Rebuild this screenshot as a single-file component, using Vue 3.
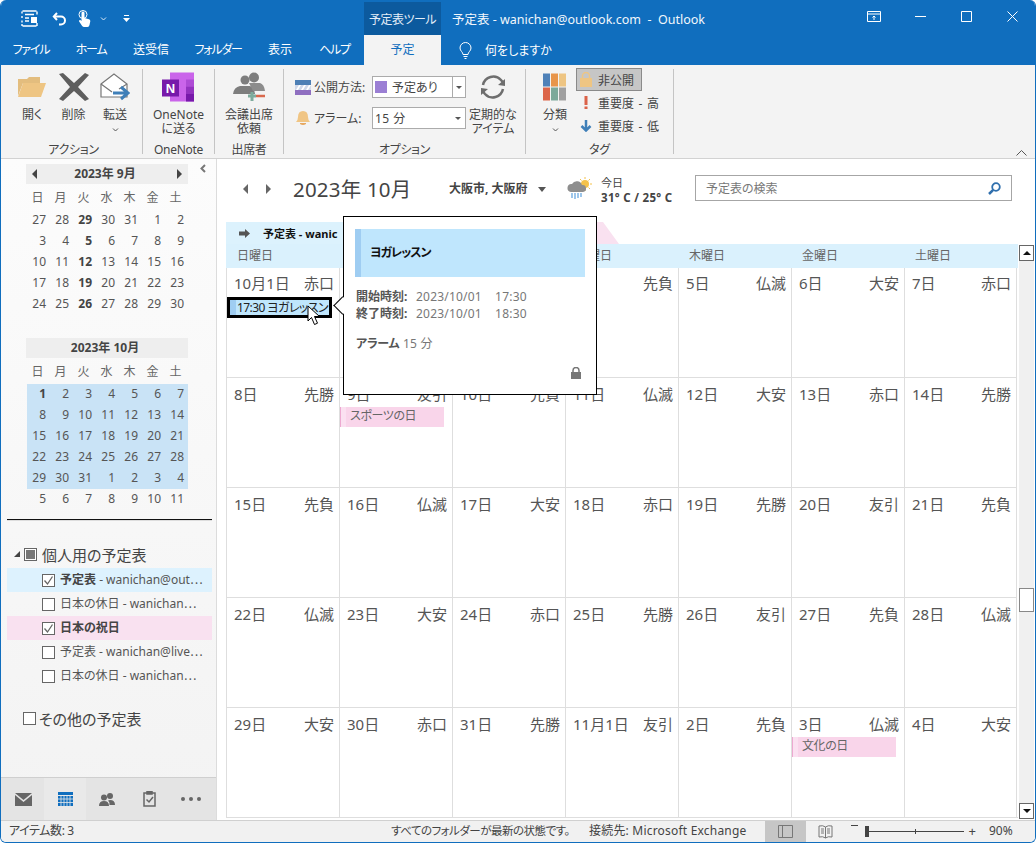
<template>
  <div class="window">
    <header class="titlebar">
      <div class="qat">
        <svg class="q-doc" width="17" height="17" viewBox="0 0 17 17" fill="none" stroke="#fff"><path d="M1.500 1h14M1.500 16h14M1 1.500v2M1 6v2M1 10.500v2M16 1.500v3M16 13v3M1 14v2" stroke-width="1.400"/><path d="M4 4.500h9M4 8h4M4 11h4" stroke-width="1.500"/><path d="M10 7h6v6h-6z" fill="#fff" stroke="none"/></svg>
        <svg class="q-undo" width="15" height="14" viewBox="0 0 15 14" fill="none" stroke="#fff" stroke-width="2"><path d="M5 1 1.800 4.500 5 8"/><path d="M2 4.500h7a4 4 0 0 1 0 8H7"/></svg>
        <svg class="q-touch" width="13" height="17" viewBox="0 0 13 17" fill="#fff"><circle cx="5" cy="4.500" r="4" fill="none" stroke="#fff"/><path d="M3.500 3a1.500 1.500 0 0 1 3 0v5l4.500 1.300q1.500.5 1.300 2l-.8 3.700q-.4 2-2 2H6q-1 0-2-1.300L.8 11 2 9.800l1.500 1.200z"/></svg>
        <svg class="q-chev" width="7" height="4" viewBox="0 0 7 4" fill="none" stroke="#dbe9f6"><path d="m1 .5 2.500 2.500L6 .5"/></svg>
        <svg class="q-more" width="7" height="7" viewBox="0 0 7 7" fill="#fff"><path d="M1 0h5v1H1zM0 3h7L3.500 7z"/></svg>
      </div>
      <div class="tool-tab">予定表ツール</div>
      <div class="title">予定表 - wanichan@outlook.com&nbsp; -&nbsp; Outlook</div>
      <div class="win-btns">
        <svg class="w-opt" width="14" height="11" viewBox="0 0 14 11" fill="none" stroke="#fff"><path d="M.5.500h13v10H.5zM.5 3h13"/><path d="M7 9V5M5.500 6.500 7 5l1.500 1.500"/></svg>
        <svg class="w-min" width="11" height="11" viewBox="0 0 11 11" stroke="#fff"><path d="M0 5.500h11"/></svg>
        <svg class="w-max" width="11" height="11" viewBox="0 0 11 11" fill="none" stroke="#fff"><path d="M.5.500h10v10H.5z"/></svg>
        <svg class="w-close" width="11" height="11" viewBox="0 0 11 11" stroke="#fff"><path d="m.5.500 10 10M10.500.500l-10 10"/></svg>
      </div>
    </header>

    <nav class="tabs">
      <div v-for="t in tabs" :key="t.label" class="tab" :class="{ kana: t.kana }" :style="{ width: t.w + 'px' }">{{ t.label }}</div>
      <div class="tab tab-active">予定</div>
      <svg class="bulb" width="13" height="17" viewBox="0 0 13 17" fill="none" stroke="#fff"><path d="M4 12.500C4 10 1 9 1 6a5.500 5.500 0 0 1 11 0c0 3-3 4-3 6.500zM4.500 14.500h4M5.500 16.500h2"/></svg>
      <div class="tell">何をしますか</div>
    </nav>

    <section class="ribbon">
      <div class="group" style="width: 138px">
        <div class="group-body actions">
          <div class="big-btn">
            <svg width="30" height="26" viewBox="0 0 30 26"><path d="M1 5h9l2-2h11v6H6L1 22z" fill="#e3bd7e"/><path d="M6 9h23l-5 14H1z" fill="#eec583"/></svg>
            <span>開く</span>
          </div>
          <div class="big-btn">
            <svg width="30" height="28" viewBox="0 0 30 28" fill="#5e5e5e"><path d="M0 1 4 0l11 10L26 0l4 2-11 12 11 12-4 2-11-10L4 28l-4-2 11-12z"/></svg>
            <span>削除</span>
          </div>
          <div class="big-btn">
            <svg width="30" height="28" viewBox="0 0 30 28" fill="none"><path d="M1 11 14 1l13 10v13H1z" fill="#fff" stroke="#777" stroke-width="1.200"/><path d="m1 11 11 8M27 11l-8 5" stroke="#777" stroke-width="1.200"/><path d="M13 20h13M21 14l7 6-7 6" stroke="#3f7fb8" stroke-width="3"/></svg>
            <span>転送</span>
            <svg class="chev" width="7" height="4" viewBox="0 0 7 4" fill="none" stroke="#555"><path d="m1 .5 2.500 2.500L6 .5"/></svg>
          </div>
        </div>
        <div class="group-label">アクション</div>
      </div>

      <div class="group" style="width: 72px">
        <div class="group-body center">
          <div class="big-btn">
            <svg width="32" height="29" viewBox="0 0 32 29"><path d="M8 0h24v29H8z" fill="#ca64ea"/><path d="M24 7h8v7h-8z" fill="#ae4bd5"/><path d="M24 14h8v7h-8z" fill="#9332bf"/><path d="M24 21h8v8h-8z" fill="#7719aa"/><path d="M0 7h17v17H0z" fill="#7719aa"/><text x="8.500" y="20" class="on-n">N</text></svg>
            <span>OneNote<br />に送る</span>
          </div>
        </div>
        <div class="group-label">OneNote</div>
      </div>

      <div class="group" style="width: 69px">
        <div class="group-body center">
          <div class="big-btn">
            <svg width="32" height="30" viewBox="0 0 32 30"><circle cx="12" cy="8" r="4.500" fill="#7d7d7d"/><circle cx="21" cy="5.500" r="5" fill="#7d7d7d"/><path d="M0 22q1-7 7-8h10q4 1 5 8z" fill="#7d7d7d"/><path d="M16 11h11q4 1 5 8H20z" fill="#8c8c8c"/><path d="M15 24h8M19 20v9" stroke="#7dab9c" stroke-width="3"/><path d="M23 24h9" stroke="#d9694d" stroke-width="2.500"/></svg>
            <span>会議出席<br />依頼</span>
          </div>
        </div>
        <div class="group-label">出席者</div>
      </div>

      <div class="group" style="width: 242px">
        <div class="group-body options">
          <div class="opt-rows">
            <div class="opt-row">
              <svg width="16" height="15" viewBox="0 0 16 15"><path d="M0 0h16v15H0z" fill="#8f6fc0"/><path d="M0 0h16v5H0z" fill="#4d7fb5"/><path d="M0 5h16v5H0z" fill="#cfd8ea"/><path d="M1 10l3-5h2l-3 5zM6 10l3-5h2l-3 5zM11 10l3-5h2l-3 5z" fill="#fff"/></svg>
              <span class="opt-label">公開方法:</span>
              <div class="select">
                <i class="swatch"></i><span class="sel-text">予定あり</span>
                <b class="sel-drop"></b>
              </div>
            </div>
            <div class="opt-row">
              <svg width="16" height="15" viewBox="0 0 16 15"><path d="M8 0q5 0 5 6 0 3 2 5H1q2-2 2-5 0-6 5-6z" fill="#f0c584"/><path d="M5 12h6v1q-3 2-6 0z" fill="#e6a85f"/></svg>
              <span class="opt-label">アラーム:</span>
              <div class="select plain">
                <span class="sel-text">15 分</span>
                <b class="sel-arrow"></b>
              </div>
            </div>
          </div>
          <div class="big-btn recur">
            <svg width="28" height="26" viewBox="0 0 28 26" fill="none" stroke="#6e6e6e" stroke-width="2.500"><path d="M4 11a10.500 10.500 0 0 1 18-5l2.500 3"/><path d="M24 15a10.500 10.500 0 0 1-18 5l-2.500-3"/><path d="m19 11 7 1V5zM9 15l-7-1v7z" fill="#6e6e6e" stroke="none"/></svg>
            <span>定期的な<br />アイテム</span>
          </div>
        </div>
        <div class="group-label">オプション</div>
      </div>

      <div class="group group-last" style="width: 148px">
        <div class="group-body tags">
          <div class="big-btn classify">
            <svg width="24" height="27" viewBox="0 0 24 27"><path d="M0 0h7v13H0z" fill="#4f81b8"/><path d="M8 0h7v13H8z" fill="#e8954a"/><path d="M16 0h7v13h-7z" fill="#eec583"/><path d="M0 14h7v13H0z" fill="#dc6549"/><path d="M8 14h7v13H8z" fill="#7ca99a"/><path d="M16 14h7v13h-7z" fill="#a0a0a0"/></svg>
            <span>分類</span>
            <svg class="chev" width="7" height="4" viewBox="0 0 7 4" fill="none" stroke="#555"><path d="m1 .5 2.500 2.500L6 .5"/></svg>
          </div>
          <div class="tag-col">
            <div class="tag tag-on">
              <svg width="12" height="15" viewBox="0 0 12 15" fill="#eec583"><path d="M0 6h12v9H0z"/><path d="M2.500 6V4a3.500 3.500 0 0 1 7 0v2" fill="none" stroke="#eec583" stroke-width="1.500"/></svg>
              <span>非公開</span>
            </div>
            <div class="tag">
              <svg width="12" height="13" viewBox="0 0 12 13" fill="#db6249"><path d="M4.500 0h3v9h-3zM4.500 10.500h3V13h-3z"/></svg>
              <span>重要度 - 高</span>
            </div>
            <div class="tag">
              <svg width="12" height="12" viewBox="0 0 12 12" fill="none" stroke="#3f7fb8" stroke-width="2.500"><path d="M6 0v10M1.500 6 6 10.500 10.500 6"/></svg>
              <span>重要度 - 低</span>
            </div>
          </div>
        </div>
        <div class="group-label">タグ</div>
      </div>
      <svg class="collapse" width="11" height="6" viewBox="0 0 11 6" fill="none" stroke="#555"><path d="m.5 5.500 5-5 5 5"/></svg>
    </section>

    <div class="body">
      <aside class="sidebar">
        <svg class="side-toggle" width="6" height="9" viewBox="0 0 6 9" fill="none" stroke="#777" stroke-width="2"><path d="M5 1 1.500 4.500 5 8"/></svg>
        <div v-for="(m, mi) in months" :key="m.title" class="mini" :class="{ 'mini-second': mi === 1 }">
          <div class="mini-head">
            <i v-if="mi === 0" class="mini-prev"></i>
            <span>{{ m.title }}</span>
            <i v-if="mi === 0" class="mini-next"></i>
          </div>
          <div class="mini-week">
            <span v-for="d in weekdays" :key="d">{{ d }}</span>
          </div>
          <div class="mini-days">
            <span
              v-for="(d, i) in m.days"
              :key="i"
              :class="{ bold: m.bold.includes(i), sel: m.selected && i < 35 }"
            >{{ d }}</span>
          </div>
        </div>
        <div class="side-rule"></div>
        <div class="cal-group first">
          <i class="tree-arrow"></i>
          <i class="check mixed"></i>
          <span>個人用の予定表</span>
        </div>
        <div
          v-for="c in calendars"
          :key="c.id"
          class="cal-row"
          :class="c.tone"
        >
          <i class="check" :class="{ checked: c.checked }">
            <svg v-if="c.checked" width="11" height="11" viewBox="0 0 11 11" fill="none" stroke="#666" stroke-width="1.300"><path d="m1.500 5.500 3 3.500 5-7.500"/></svg>
          </i>
          <span class="cal-name"><b v-if="c.bold">{{ c.bold }}</b>{{ c.rest }}</span>
        </div>
        <div class="cal-group other">
          <i class="check"></i>
          <span>その他の予定表</span>
        </div>
        <div class="side-fill"></div>
        <div class="side-nav">
          <div class="nav-item">
            <svg width="17" height="13" viewBox="0 0 17 13"><path d="M0 0h17L8.500 7z" fill="#666"/><path d="M0 2v11h17V2L8.500 9z" fill="#666"/></svg>
          </div>
          <div class="nav-item nav-on">
            <svg width="15" height="14" viewBox="0 0 15 14"><path d="M0 0h15v3H0z" fill="#106ebe"/><path d="M0 4h15v10H0z" fill="#106ebe"/><path d="M3 4v10M6 4v10M9 4v10M12 4v10M0 7h15M0 10.500h15" stroke="#e9e9e9" stroke-width=".8"/></svg>
          </div>
          <div class="nav-item">
            <svg width="16" height="13" viewBox="0 0 16 13" fill="#666"><circle cx="5" cy="4.500" r="3"/><circle cx="11" cy="3" r="3"/><path d="M0 13q0-5 5-5t5 5z"/><path d="M10.500 12H16q0-5-5-5-1 0-2 .5 2 1.500 1.500 4.500z"/></svg>
          </div>
          <div class="nav-item">
            <svg width="13" height="16" viewBox="0 0 13 16" fill="none" stroke="#666" stroke-width="1.500"><path d="M1 2h11v13H1z"/><path d="M4 0h5v3H4z" fill="#666"/><path d="m3.500 8.500 2.500 2.500 4-5" /></svg>
          </div>
          <div class="nav-item">
            <svg width="20" height="4" viewBox="0 0 20 4" fill="#666"><circle cx="2" cy="2" r="2"/><circle cx="10" cy="2" r="2"/><circle cx="18" cy="2" r="2"/></svg>
          </div>
        </div>
      </aside>

      <main class="main">
        <div class="toolbar">
          <i class="nav-prev"></i>
          <i class="nav-next"></i>
          <div class="month-title">2023年 10月</div>
          <div class="city">大阪市, 大阪府</div>
          <i class="city-drop"></i>
          <svg class="weather" width="25" height="22" viewBox="0 0 25 22"><circle cx="18" cy="7" r="4" fill="#f4c24b"/><path d="M18 0v2M18 12v2M11 7h2M23 7h2M13 2l1.500 1.500M23 2l-1.500 1.500M23 12l-1.500-1.500" stroke="#f4c24b"/><path d="M4 15a4 4 0 0 1 1-8 5.500 5.500 0 0 1 10 1 3.500 3.500 0 0 1 1 7z" fill="#8e8e8e"/><path d="M5 16v5M8 16v6M11 16v5M14 16v4" stroke="#6aa9e0" stroke-width="1.300"/></svg>
          <div class="weather-text">
            <div>今日</div>
            <b>31° C / 25° C</b>
          </div>
          <div class="search">
            <span>予定表の検索</span>
            <svg width="13" height="13" viewBox="0 0 13 13" fill="none" stroke="#2f6fad" stroke-width="1.800"><circle cx="8" cy="5" r="3.800"/><path d="M5.200 7.800 1 12" stroke-width="2.500"/></svg>
          </div>
        </div>

        <div class="cal-wrap">
          <div class="cal">
            <div class="cal-tabs">
              <div class="cal-tab blue">
                <svg width="11" height="9" viewBox="0 0 11 9" fill="#555"><path d="M0 2.500h6V0l5 4.500L6 9V6.500H0z"/></svg>
                <b>予定表 - wanic</b>
              </div>
              <div class="cal-tab pink"></div>
            </div>
            <div class="day-head">
              <span v-for="d in dayNames" :key="d">{{ d }}</span>
            </div>
            <div class="grid">
              <div v-for="(c, i) in cells" :key="i" class="cell">
                <div class="cell-top">
                  <span>{{ c.d }}</span>
                  <span>{{ c.r }}</span>
                </div>
                <div v-if="i === 0" class="event">17:30 ヨガレッスン</div>
                <div v-if="c.holiday" class="holiday">{{ c.holiday }}</div>
              </div>
            </div>
          </div>
          <div class="vscroll">
            <div class="vbtn"><i class="up"></i></div>
            <div class="vspace"></div>
            <div class="vthumb"></div>
            <div class="vspace2"></div>
            <div class="vbtn"><i class="down"></i></div>
          </div>
        </div>

        <div class="popup">
          <i class="pop-arrow"></i>
          <div class="pop-head">ヨガレッスン</div>
          <div class="pop-line"><b>開始時刻:</b><span>2023/10/01&nbsp;&nbsp;&nbsp;&nbsp;17:30</span></div>
          <div class="pop-line"><b>終了時刻:</b><span>2023/10/01&nbsp;&nbsp;&nbsp;&nbsp;18:30</span></div>
          <div class="pop-line alarm"><b>アラーム</b><span>15 分</span></div>
          <svg class="pop-lock" width="10" height="12" viewBox="0 0 10 12" fill="#777"><path d="M0 5h10v7H0z"/><path d="M2 5V3.500a3 3 0 0 1 6 0V5" fill="none" stroke="#777" stroke-width="1.500"/></svg>
        </div>

        <svg class="cursor" width="17" height="21" viewBox="0 0 17 21"><path d="M1 1v15l3.500-3.500 3 7 3-1.300-3-6.700h5z" fill="#fff" stroke="#000"/></svg>
      </main>
    </div>

    <footer class="status">
      <span class="st-count">アイテム数: 3</span>
      <span class="st-sync">すべてのフォルダーが最新の状態です。</span>
      <span class="st-conn">接続先: Microsoft Exchange</span>
      <div class="st-view">
        <svg width="15" height="13" viewBox="0 0 15 13" fill="none" stroke="#777"><path d="M.5.500h14v12H.5zM4.500.500v12"/></svg>
      </div>
      <svg class="st-read" width="15" height="14" viewBox="0 0 15 14" fill="none" stroke="#777"><path d="M1 1q4-1 6.500 1Q10 0 14 1v11q-4-1-6.500 1Q5 11 1 12zM7.500 2v11M3 4h3M3 6h3M3 8h3M9 4h3M9 6h3M9 8h3"/></svg>
      <div class="zoom">
        <span class="z-minus"></span>
        <div class="z-track"><i class="z-thumb"></i><i class="z-mid"></i></div>
        <span class="z-plus">+</span>
      </div>
      <span class="st-pct">90%</span>
    </footer>
  </div>
</template>

<script setup>
const tabs = [
  { label: 'ファイル', w: 60, kana: true },
  { label: 'ホーム', w: 60, kana: true },
  { label: '送受信', w: 60 },
  { label: 'フォルダー', w: 74, kana: true },
  { label: '表示', w: 50 },
  { label: 'ヘルプ', w: 59, kana: true }
]

const weekdays = ['日', '月', '火', '水', '木', '金', '土']
const dayNames = ['日曜日', '月曜日', '火曜日', '水曜日', '木曜日', '金曜日', '土曜日']

const months = [
  {
    title: '2023年 9月',
    bold: [2, 9, 16, 23, 30],
    days: [27, 28, 29, 30, 31, 1, 2, 3, 4, 5, 6, 7, 8, 9, 10, 11, 12, 13, 14, 15, 16,
      17, 18, 19, 20, 21, 22, 23, 24, 25, 26, 27, 28, 29, 30]
  },
  {
    title: '2023年 10月',
    selected: true,
    bold: [0],
    days: [1, 2, 3, 4, 5, 6, 7, 8, 9, 10, 11, 12, 13, 14, 15, 16, 17, 18, 19, 20, 21,
      22, 23, 24, 25, 26, 27, 28, 29, 30, 31, 1, 2, 3, 4, 5, 6, 7, 8, 9, 10, 11]
  }
]

const calendars = [
  { id: 1, bold: '予定表', rest: ' - wanichan@out⋯', checked: true, tone: 'blue' },
  { id: 2, rest: '日本の休日 - wanichan⋯' },
  { id: 3, bold: '日本の祝日', rest: '', checked: true, tone: 'pink' },
  { id: 4, rest: '予定表 - wanichan@live⋯' },
  { id: 5, rest: '日本の休日 - wanichan⋯' }
]

const rokuyo = ['赤口', '先勝', '友引', '先負', '仏滅', '大安', '赤口', '先勝', '友引', '先負', '仏滅', '大安', '赤口', '先勝',
  '先負', '仏滅', '大安', '赤口', '先勝', '友引', '先負', '仏滅', '大安', '赤口', '先勝', '友引', '先負', '仏滅',
  '大安', '赤口', '先勝', '友引', '先負', '仏滅', '大安']

const cells = rokuyo.map((r, i) => {
  let d = (i + 1) + '日'
  if (i === 0) d = '10月1日'
  if (i === 31) d = '11月1日'
  if (i > 31) d = (i - 30) + '日'
  return { d, r }
})
cells[8].holiday = 'スポーツの日'
cells[33].holiday = '文化の日'
</script>

<style>
html, body { margin: 0; background: #fff; }
</style>

<style scoped>
* { box-sizing: border-box; }
.window {
  width: 1036px;
  height: 843px;
  display: flex;
  flex-direction: column;
  border: 1px solid #106ebe;
  border-top: 0;
  border-radius: 6px;
  overflow: hidden;
  position: relative;
  background: #fff;
  font-family: "Noto Sans", "Noto Sans CJK JP", sans-serif;
  font-feature-settings: "palt";
  font-size: 12px;
  color: #444;
}
i { display: block; }

/* title */
.titlebar {
  height: 35px;
  background: #106ebe;
  position: relative;
  display: flex;
  color: #fff;
  flex: none;
}
.qat { width: 363px; display: flex; align-items: center; padding-left: 20px; padding-top: 2px; }
.q-undo { margin-left: 14px; }
.q-touch { margin-left: 11px; }
.q-chev { margin-left: 9px; }
.q-more { margin-left: 16px; }
.tool-tab {
  width: 77px;
  margin-top: 2px;
  background: #0c5a9e;
  display: flex;
  align-items: center;
  justify-content: center;
  color: #e4eef8;
  font-size: 12px;
  letter-spacing: -.5px;
}
.title { margin-left: 11px; line-height: 39px; font-size: 12.500px; color: #f2f7fc; }
.win-btns { position: absolute; top: 11px; left: 0; }
.win-btns svg { position: absolute; }
.w-opt { left: 866px; }
.w-min { left: 914px; top: 0; }
.w-max { left: 960px; }
.w-close { left: 1006px; }

/* tabs */
.tabs {
  height: 30px;
  flex: none;
  background: #106ebe;
  display: flex;
  color: #fff;
  align-items: center;
}
.tab { text-align: center; line-height: 30px; }
.tab.kana { letter-spacing: -1.200px; }
.tab-active {
  width: 77px;
  height: 30px;
  background: #f3f3f3;
  color: #106ebe;
}
.bulb { margin-left: 18px; }
.tell { margin-left: 13px; }

/* ribbon */
.ribbon {
  height: 94px;
  flex: none;
  background: #f3f3f3;
  border-bottom: 1px solid #d2d2d2;
  display: flex;
  padding: 4px 0 0 4px;
  position: relative;
}
.group {
  height: 85px;
  border-right: 1px solid #c4c4c4;
  display: flex;
  flex-direction: column;
  flex: none;
}
.group-body { height: 72px; display: flex; flex: none; }
.group-label { text-align: center; font-size: 12px; color: #444; line-height: 14px; margin-top: 2px; letter-spacing: -.3px; }
.center { justify-content: center; }
.big-btn {
  display: flex;
  flex-direction: column;
  align-items: center;
  text-align: center;
  line-height: 14px;
  white-space: nowrap;
}
.big-btn > svg:first-child { height: 30px; margin-top: 3px; margin-bottom: 6px; flex: none; }
.big-btn .chev { margin-top: 6px; }
.actions { padding-left: 12px; gap: 11.500px; }
.actions .big-btn { width: 30px; }
.on-n { font: bold 13px "Liberation Sans", sans-serif; fill: #fff; text-anchor: middle; }
.options { padding: 7px 0 0 11px; }
.opt-rows { display: flex; flex-direction: column; gap: 9px; }
.opt-row { display: flex; align-items: center; height: 22px; }
.opt-label { margin-left: 3px; width: 58px; }
.select {
  width: 94px;
  height: 22px;
  border: 1px solid #ababab;
  background: #fff;
  display: flex;
  align-items: center;
  position: relative;
}
.swatch { width: 12px; height: 12px; background: #9b7fd4; margin-left: 2px; }
.sel-text { margin-left: 5px; }
.plain .sel-text { margin-left: 2px; letter-spacing: .5px; }
.sel-drop { position: absolute; right: 0; top: 0; bottom: 0; width: 13px; border-left: 1px solid #ababab; }
.sel-drop::after, .sel-arrow::after {
  content: "";
  position: absolute;
  top: 9px;
  left: 3px;
  border: 3px solid transparent;
  border-top: 3px solid #555;
  border-bottom: 0;
}
.sel-arrow { position: absolute; right: 0; top: 0; bottom: 0; width: 13px; }
.recur { margin-left: 2px; margin-top: -7px; width: 50px; }
.tags { padding-left: 17px; }
.classify { width: 24px; margin-right: 9px; }
.classify span { white-space: nowrap; }
.tag-col { display: flex; flex-direction: column; margin-top: -1px; }
.tag {
  height: 23px;
  display: flex;
  align-items: center;
  gap: 6px;
  padding-left: 4px;
  white-space: nowrap;
  width: 66px;
  word-spacing: 1.500px;
}
.tag svg { flex: none; }
.tag-on { background: #c6c6c6; border: 1px solid #8a8a8a; padding-left: 3px; }
.collapse { position: absolute; right: 8px; bottom: 2px; }

/* body */
.body { flex: 1; display: flex; min-height: 0; }
.sidebar {
  width: 216px;
  flex: none;
  border-right: 1px solid #dcdcdc;
  background: linear-gradient(#fcfcfc, #f3f3f3);
  display: flex;
  flex-direction: column;
  position: relative;
}
.side-toggle { position: absolute; left: 199px; top: 5px; }
.mini { margin: 5px 0 0 25px; width: 162px; }
.mini-second { margin-top: 23px; }
.mini-head {
  height: 20px;
  background: #eeeeee;
  font-weight: 700;
  text-align: center;
  font-size: 12px;
  line-height: 20px;
  position: relative;
  color: #444;
  padding-right: 4px;
}
.mini-prev, .mini-next {
  position: absolute;
  top: 5px;
  border: 5px solid transparent;
}
.mini-prev { left: 1px; border-right-color: #444; }
.mini-next { right: 1px; border-left-color: #444; }
.mini-week { display: grid; grid-template-columns: repeat(7, 23px); height: 26px; text-align: center; line-height: 28px; color: #666; padding-right: 1px; }
.mini-days { display: grid; grid-template-columns: repeat(7, 23px); grid-auto-rows: 21px; color: #555; margin-left: 1px; }
.mini-days span { text-align: right; padding-right: 4px; line-height: 20px; }
.mini-days .bold { font-weight: 700; color: #444; }
.mini-days .sel { background: #c9e3f6; }
.side-rule { height: 2px; margin: 9px 4px 0 6px; background: #111; border-bottom: 1px solid #ddd; flex: none; }
.cal-group { display: flex; align-items: center; font-size: 15px; color: #444; flex: none; }
.first { margin: 22px 0 0 13px; height: 22px; }
.other { margin: 19px 0 0 22px; height: 22px; gap: 3px; }
.tree-arrow { width: 0; height: 0; border-style: solid; border-width: 0 0 6px 6px; border-color: transparent transparent #444 transparent; margin-right: 4px; }
.first span { margin-left: 5px; }
.check {
  width: 13px;
  height: 13px;
  border: 1px solid #666;
  background: #fff;
  display: flex;
  align-items: center;
  justify-content: center;
  flex: none;
}
.mixed::after { content: ""; width: 9px; height: 9px; background: #777; }
.cal-row {
  height: 24px;
  margin: 0 4px 0 6px;
  display: flex;
  align-items: center;
  padding-left: 35px;
  white-space: nowrap;
  color: #555;
  flex: none;
  font-size: 12px;
}
.first + .cal-row { margin-top: 3px; }
.cal-row.blue { background: #ddf2fe; }
.cal-row.pink { background: #f9e1f0; }
.cal-name { margin-left: 5px; overflow: hidden; padding-bottom: 2px; }
.cal-name b { color: #444; }
.side-fill { flex: 1; }
.side-nav {
  height: 43px;
  background: #e4e4e4;
  border-top: 1px solid #cfcfcf;
  display: flex;
  padding-left: 1px;
  flex: none;
}
.nav-item { width: 42px; display: flex; align-items: center; justify-content: center; }
.nav-on { background: #e9e9e9; }

/* main */
.main { flex: 1; padding-left: 9px; position: relative; min-width: 0; }
.toolbar { height: 63px; display: flex; align-items: flex-start; position: relative; }
.nav-prev, .nav-next { position: absolute; top: 25px; border: 5px solid transparent; }
.nav-prev { left: 17px; border-right-color: #666; border-left-width: 0; }
.nav-next { left: 40px; border-left-color: #666; border-right-width: 0; }
.month-title { margin: 15px 0 0 67px; font-size: 20.500px; line-height: 30px; color: #444; width: 156px; white-space: nowrap; letter-spacing: .2px; }
.city { margin-top: 22px; font-weight: 700; line-height: 16px; color: #444; width: 89px; white-space: nowrap; }
.city-drop { margin: 28px 0 0 0; border: 4px solid transparent; border-top: 5px solid #555; border-bottom: 0; }
.weather { margin: 18px 0 0 21px; flex: none; }
.weather-text { margin: 16px 0 0 9px; font-size: 11px; line-height: 15px; width: 94px; }
.weather-text b { white-space: nowrap; font-size: 11.500px; letter-spacing: .3px; }
.search {
  width: 317px;
  height: 26px;
  margin-top: 16px;
  border: 1px solid #a6a6a6;
  background: #fff;
  display: flex;
  align-items: center;
  justify-content: space-between;
  padding: 0 10px;
  color: #777;
  flex: none;
}

.cal-wrap { display: flex; height: 598px; }
.cal { width: 792px; }
.cal-tabs { height: 22px; display: flex; position: relative; }
.cal-tab { display: flex; align-items: center; gap: 13px; font-size: 11px; color: #111; white-space: nowrap; overflow: hidden; }
.cal-tab svg { flex: none; }
.cal-tab.blue { width: 190px; background: #dcf2fd; padding-left: 13px; }
.cal-tab.pink { width: 203px; background: #f9e1f0; clip-path: polygon(0 0, 187px 0, 100% 100%, 0 100%); }
.day-head { height: 24px; background: #daf1fd; display: grid; grid-template-columns: repeat(7, 113px); color: #666; line-height: 24px; }
.day-head span { padding-left: 11px; }
.grid {
  display: grid;
  grid-template-columns: repeat(7, 113px);
  grid-template-rows: 109px;
  grid-auto-rows: 110px;
  border-bottom: 1px solid #dedede;
}
.cell { border-left: 1px solid #dedede; border-top: 1px solid #dedede; position: relative; }
.cell:nth-child(-n + 7) { border-top: 0; }
.cell:nth-child(7n) { border-right: 1px solid #dedede; }
.cell-top {
  display: flex;
  justify-content: space-between;
  font-size: 15px;
  line-height: 20px;
  padding: 6px 5px 0 7px;
  color: #555;
}
.cell:nth-child(-n + 7) .cell-top { padding-top: 5px; }
.event {
  position: absolute;
  left: 0;
  top: 29px;
  width: 105px;
  height: 21px;
  border: 3px solid #000;
  background: linear-gradient(90deg, #9fcdf2 6px, #bfe6fd 6px);
  color: #222;
  line-height: 15px;
  padding-left: 7px;
  white-space: nowrap;
  overflow: hidden;
  z-index: 1;
  letter-spacing: -.6px;
}
.holiday {
  margin: 3px 0 0 0;
  width: 104px;
  height: 20px;
  background: linear-gradient(90deg, #fbe1f1 5px, #f9d5ea 5px);
  border-left: 1px solid #eda9d1;
  line-height: 18px;
  padding-left: 9px;
  color: #666;
  letter-spacing: -.4px;
}
.vscroll { width: 15px; margin-top: 23px; margin-left: 1px; display: flex; flex-direction: column; background: #f0f0f0; height: 574px; }
.vbtn { height: 16px; border: 1px solid #666; background: #fff; flex: none; display: flex; align-items: center; justify-content: center; }
.up { border: 4px solid transparent; border-bottom: 4px solid #111; border-top: 0; }
.down { border: 4px solid transparent; border-top: 4px solid #111; border-bottom: 0; }
.vspace { height: 327px; }
.vthumb { height: 24px; background: #fff; border: 1px solid #888; }
.vspace2 { flex: 1; }

.popup {
  position: absolute;
  left: 126px;
  top: 57px;
  width: 254px;
  height: 179px;
  background: #fff;
  border: 1px solid #000;
  padding: 12px 11px 0 11px;
  z-index: 3;
}
.pop-arrow {
  position: absolute;
  left: -8px;
  top: 82px;
  width: 13px;
  height: 13px;
  background: #fff;
  border-left: 1px solid #000;
  border-bottom: 1px solid #000;
  transform: rotate(45deg);
}
.pop-head {
  height: 48px;
  background: linear-gradient(90deg, #9fcdf2 6px, #bfe6fd 6px);
  font-weight: 700;
  color: #111;
  line-height: 48px;
  padding-left: 15px;
  margin-bottom: 11px;
  letter-spacing: -1px;
}
.pop-line { display: flex; line-height: 17px; color: #777; padding-left: 1px; }
.pop-line b { width: 60px; color: #555; white-space: nowrap; }
.pop-line span { letter-spacing: .2px; }
.alarm { margin-top: 13px; }
.alarm b { width: 47px; letter-spacing: -.3px; }
.pop-lock { position: absolute; right: 15px; bottom: 15px; }
.cursor { position: absolute; left: 90px; top: 146px; z-index: 2; }

/* status */
.status {
  height: 22px;
  flex: none;
  background: #f1f1f1;
  border-top: 1px solid #d0d0d0;
  display: flex;
  align-items: center;
  color: #444;
  position: relative;
  line-height: 19px;
}
.status span { align-self: flex-start; }
.st-count { margin-left: 8px; width: 382px; letter-spacing: -.4px; white-space: nowrap; }
.st-sync { width: 198px; font-size: 11.500px; white-space: nowrap; letter-spacing: -.5px; }
.st-conn { width: 176px; white-space: nowrap; letter-spacing: .2px; }
.st-view { width: 41px; height: 21px; background: #c6c6c6; display: flex; align-items: center; justify-content: center; }
.st-read { margin-left: 12px; flex: none; }
.zoom { display: flex; align-items: center; margin-left: 18px; width: 125px; }
.z-minus { width: 7px; height: 1px; background: #444; }
.z-track { width: 100px; height: 1px; background: #444; margin-left: 7px; position: relative; }
.z-thumb { position: absolute; left: 0; top: -5px; width: 4px; height: 11px; background: #444; }
.z-mid { position: absolute; left: 50px; top: -2px; width: 1px; height: 5px; background: #444; }
.z-plus { margin-left: 5px; font-size: 13px; line-height: 13px; align-self: center !important; }
.st-pct { margin-left: 13px; }
</style>
